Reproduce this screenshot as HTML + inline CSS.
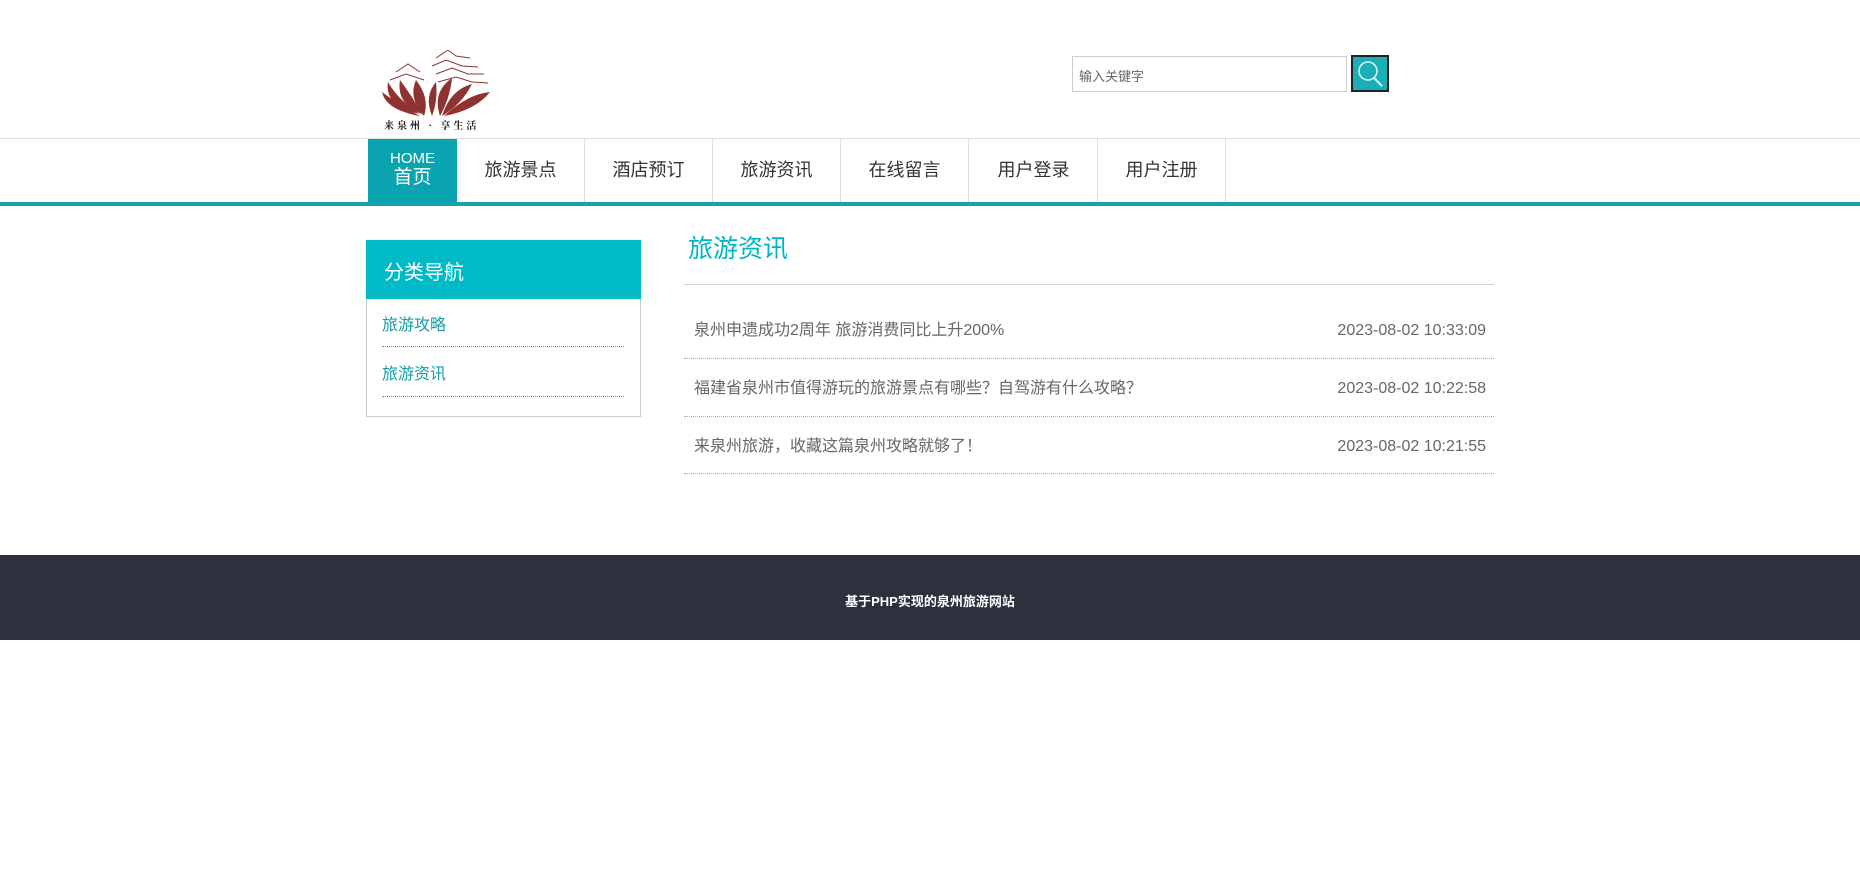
<!DOCTYPE html>
<html><head><meta charset="utf-8"><style>
*{margin:0;padding:0;box-sizing:border-box}
body{width:1860px;height:889px;background:#fff;font-family:"Liberation Sans","Noto Sans CJK SC",sans-serif;position:relative;overflow:hidden}
.a{position:absolute}
.search{left:1072px;top:56px;width:275px;height:36px;border:1px solid #ccc;font-size:13px;color:#666;padding:9px 0 0 6px}
.btn{left:1351px;top:55px;width:38px;height:37px;background:#1aafb5;border:2px solid #222}
.hl{left:0;top:138px;width:1860px;height:1px;background:#ddd}
.nav{left:0;top:202px;width:1860px;height:4px;background:#17a2ab}
.home{left:368px;top:139px;width:89px;height:63px;background:#0aa4b0;color:#fff;text-align:center}
.ni{top:139px;height:63px;width:128px;border-right:1px solid #ddd;text-align:center;line-height:63px;font-size:18px;color:#333}
.side{left:366px;top:240px;width:275px;height:177px;border:1px solid #ccc}
.sh{left:366px;top:240px;width:275px;height:59px;background:#00bac6;color:#fff;font-size:20px;padding:16px 0 0 18px}
.si{left:382px;width:242px;border-bottom:1px dotted #888;color:#139fa8;font-size:16px}
.row{left:684px;width:810px;border-bottom:1px dotted #aaa;font-size:16px;color:#666;display:flex;justify-content:space-between;align-items:center;padding:0 8px 6px 10px}
.row span{line-height:20px}
.foot{left:0;top:555px;width:1860px;height:85px;background:#2d313d;color:#fff;font-size:13px;font-weight:bold;text-align:center;padding-top:36px}
</style></head><body>
<svg class="a" style="left:380px;top:50px" width="125" height="85" viewBox="0 0 125 85">
<g fill="none" stroke="#8b3535" stroke-width="1">
<path d="M56 8 L68 0 L76 6 L90 8"/><path d="M52 16 L66 10 L82 16 L98 17"/><path d="M16 22 L28 14 L40 22"/><path d="M10 30 L26 24 L44 30"/><path d="M56 24 L72 18 L88 24 L104 24"/><path d="M58 32 L76 27 L92 32 L108 33"/>
</g>
<g fill="#8e3331">
<path d="M2 42 Q6 60 40 66 Q18 54 2 42Z"/>
<path d="M8 32 Q4 56 40 64 Q18 50 8 32Z"/>
<path d="M20 30 Q16 54 42 64 Q32 46 20 30Z"/>
<path d="M36 30 Q50 48 44 66 Q28 48 36 30Z"/>
<path d="M60 66 Q52 42 72 28 Q70 48 60 66Z"/>
<path d="M62 66 Q70 40 92 34 Q82 54 62 66Z"/>
<path d="M64 66 Q88 44 110 42 Q96 60 64 66Z"/>
<path d="M52 66 Q44 46 56 32 Q58 50 52 66Z"/>
</g>
<text x="4" y="79" font-size="10" font-family="Noto Serif CJK SC,serif" fill="#222" font-weight="bold" letter-spacing="3">来泉州 · 享生活</text>
</svg>
<div class="a search">输入关键字</div>
<div class="a btn"><svg width="34" height="33" viewBox="0 0 34 33"><circle cx="15" cy="14" r="9" fill="none" stroke="#d8f4f5" stroke-width="1.6"/><path d="M21 21 L29 29" stroke="#d8f4f5" stroke-width="2"/></svg></div>
<div class="a hl"></div>
<div class="a home"><div style="font-size:15px;margin-top:11px">HOME</div><div style="font-size:19px;line-height:22px">首页</div></div>
<div class="a ni" style="left:457px">旅游景点</div>
<div class="a ni" style="left:585px">酒店预订</div>
<div class="a ni" style="left:713px">旅游资讯</div>
<div class="a ni" style="left:841px">在线留言</div>
<div class="a ni" style="left:970px">用户登录</div>
<div class="a ni" style="left:1098px">用户注册</div>
<div class="a nav"></div>
<div class="a side"></div>
<div class="a sh">分类导航</div>
<div class="a si" style="top:311px;height:36px">旅游攻略</div>
<div class="a si" style="top:360px;height:37px">旅游资讯</div>
<div class="a" style="left:688px;top:229px;font-size:25px;color:#00b5c2">旅游资讯</div>
<div class="a" style="left:684px;top:284px;width:810px;height:1px;background:#d5d5d5"></div>
<div class="a row" style="top:310px;height:49px"><span>泉州申遗成功2周年 旅游消费同比上升200%</span><span>2023-08-02 10:33:09</span></div>
<div class="a row" style="top:368px;height:49px"><span>福建省泉州市值得游玩的旅游景点有哪些？自驾游有什么攻略？</span><span>2023-08-02 10:22:58</span></div>
<div class="a row" style="top:426px;height:48px"><span>来泉州旅游，收藏这篇泉州攻略就够了！</span><span>2023-08-02 10:21:55</span></div>
<div class="a foot">基于PHP实现的泉州旅游网站</div>
</body></html>
